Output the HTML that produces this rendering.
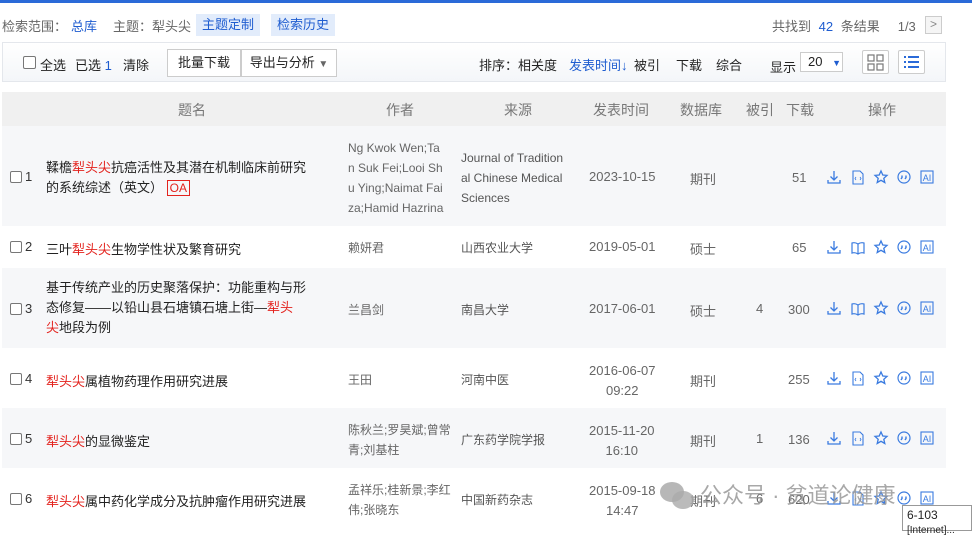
<!DOCTYPE html><html><head><meta charset="utf-8"><style>
*{margin:0;padding:0;box-sizing:border-box}
body{width:972px;height:531px;overflow:hidden;background:#fff;font-family:"Liberation Sans","Noto Sans CJK SC",sans-serif;font-size:13px;color:#333;position:relative}
.a{position:absolute;white-space:nowrap}
.blue{color:#1f5dd0}
.red{color:#e3231e}
.g{color:#666}
.row{position:absolute;left:2px;width:944px}
</style></head><body>
<div class="a" style="left:0;top:0;width:972px;height:3px;background:#2a6ad8"></div>
<div class="a g" style="left:2px;top:16px">检索范围：<b class="blue" style="font-weight:normal;margin-left:4px">总库</b><span style="margin-left:16px">主题：犁头尖</span></div>
<div class="a blue" style="left:196px;top:14px;width:64px;height:22px;background:#e2ecfb;text-align:center;line-height:22px">主题定制</div>
<div class="a blue" style="left:271px;top:14px;width:64px;height:22px;background:#e2ecfb;text-align:center;line-height:22px">检索历史</div>
<div class="a g" style="left:772px;top:16px">共找到 <span class="blue" style="margin:0 4px">42</span> 条结果<span style="margin-left:18px">1/3</span></div>
<div class="a" style="left:925px;top:16px;width:17px;height:18px;border:1px solid #ccc;background:#f5f5f5;text-align:center;line-height:15px;color:#888;font-size:12px">&gt;</div>
<div class="a" style="left:2px;top:42px;width:944px;height:40px;background:linear-gradient(#fff,#f4f6f9);border:1px solid #e4e7ec"></div>
<div class="a" style="left:23px;top:56px;width:13px;height:13px;border:1px solid #777;border-radius:2px;background:#fff"></div>
<div class="a" style="left:40px;top:55px;color:#222">全选</div>
<div class="a" style="left:75px;top:55px;color:#222">已选 <span class="blue">1</span></div>
<div class="a" style="left:123px;top:55px;color:#222">清除</div>
<div class="a" style="left:167px;top:49px;width:74px;height:28px;border:1px solid #ccc;background:#fff;text-align:center;line-height:26px;color:#222">批量下载</div>
<div class="a" style="left:241px;top:49px;width:96px;height:28px;border:1px solid #ccc;background:#fff;text-align:center;line-height:26px;color:#222">导出与分析 <span style="color:#666;font-size:10px">▼</span></div>
<div class="a" style="left:479px;top:55px;color:#222">排序：相关度</div>
<div class="a blue" style="left:569px;top:55px">发表时间<span style="font-weight:bold">↓</span></div>
<div class="a" style="left:634px;top:55px;color:#222">被引</div>
<div class="a" style="left:676px;top:55px;color:#222">下载</div>
<div class="a" style="left:716px;top:55px;color:#222">综合</div>
<div class="a" style="left:770px;top:57px;color:#222">显示</div>
<div class="a" style="left:800px;top:52px;width:43px;height:20px;border:1px solid #ccc;background:#fff;padding-left:7px;line-height:18px;color:#222">20 <span style="color:#1f5dd0;font-size:9px;margin-left:6px">▼</span></div>
<div class="a" style="left:862px;top:50px;width:27px;height:24px;border:1px solid #ccc;border-radius:2px;background:#fff"><svg width="25" height="22"><g fill="none" stroke="#777" stroke-width="1.2"><rect x="5" y="4" width="6" height="6"/><rect x="14" y="4" width="6" height="6"/><rect x="5" y="13" width="6" height="6"/><rect x="14" y="13" width="6" height="6"/></g></svg></div>
<div class="a" style="left:898px;top:50px;width:27px;height:24px;border:1px solid #ccc;border-radius:2px;background:#fff"><svg width="25" height="22"><g stroke="#2a6ad8" stroke-width="2"><line x1="5" y1="6" x2="7" y2="6"/><line x1="9" y1="6" x2="20" y2="6"/><line x1="5" y1="11" x2="7" y2="11"/><line x1="9" y1="11" x2="20" y2="11"/><line x1="5" y1="16" x2="7" y2="16"/><line x1="9" y1="16" x2="20" y2="16"/></g></svg></div>

<div class="row" style="top:92px;height:34px;background:#f0f0f0;color:#777;font-size:14px">
<span class="a" style="left:176px;top:8px">题名</span><span class="a" style="left:384px;top:8px">作者</span><span class="a" style="left:502px;top:8px">来源</span><span class="a" style="left:591px;top:8px">发表时间</span><span class="a" style="left:678px;top:8px">数据库</span><span class="a" style="left:744px;top:8px">被引</span><span class="a" style="left:784px;top:8px">下载</span><span class="a" style="left:866px;top:8px">操作</span></div>

<div class="row" style="top:126px;height:100px;background:#f6f7f9"></div>
<div class="row" style="top:268px;height:80px;background:#f6f7f9"></div>
<div class="row" style="top:408px;height:60px;background:#f6f7f9"></div>

<div class="a" style="left:10px;top:171px;width:12px;height:12px;border:1px solid #777;border-radius:2px;background:#fff"></div><div class="a" style="left:25px;top:169px">1</div>
<div class="a" style="left:46px;top:158px;line-height:20px;font-size:13px;color:#222">鞣檐<span class="red">犁头尖</span>抗癌活性及其潜在机制临床前研究<br>的系统综述（英文） <span class="red" style="border:1px solid #e3231e;padding:0 2px;font-size:12px">OA</span></div>
<div class="a g" style="left:348px;top:138px;line-height:20px;font-size:12px">Ng Kwok Wen;Ta<br>n Suk Fei;Looi Sh<br>u Ying;Naimat Fai<br>za;Hamid Hazrina</div>
<div class="a" style="left:461px;top:148px;line-height:20px;font-size:12px;color:#555">Journal of Tradition<br>al Chinese Medical<br>Sciences</div>
<div class="a g" style="left:589px;top:169px">2023-10-15</div><div class="a g" style="left:690px;top:169px">期刊</div><div class="a g" style="left:792px;top:170px">51</div>

<div class="a" style="left:10px;top:241px;width:12px;height:12px;border:1px solid #777;border-radius:2px;background:#fff"></div><div class="a" style="left:25px;top:239px">2</div>
<div class="a" style="left:46px;top:239px;color:#222">三叶<span class="red">犁头尖</span>生物学性状及繁育研究</div>
<div class="a g" style="left:348px;top:239px;font-size:12px">赖妍君</div><div class="a" style="left:461px;top:239px;font-size:12px;color:#555">山西农业大学</div>
<div class="a g" style="left:589px;top:239px">2019-05-01</div><div class="a g" style="left:690px;top:239px">硕士</div><div class="a g" style="left:792px;top:240px">65</div>

<div class="a" style="left:10px;top:303px;width:12px;height:12px;border:1px solid #777;border-radius:2px;background:#fff"></div><div class="a" style="left:25px;top:301px">3</div>
<div class="a" style="left:46px;top:278px;line-height:20px;color:#222">基于传统产业的历史聚落保护：功能重构与形<br>态修复——以铅山县石塘镇石塘上街—<span class="red">犁头</span><br><span class="red">尖</span>地段为例</div>
<div class="a g" style="left:348px;top:301px;font-size:12px">兰昌剑</div><div class="a" style="left:461px;top:301px;font-size:12px;color:#555">南昌大学</div>
<div class="a g" style="left:589px;top:301px">2017-06-01</div><div class="a g" style="left:690px;top:301px">硕士</div><div class="a g" style="left:756px;top:301px">4</div><div class="a g" style="left:788px;top:302px">300</div>

<div class="a" style="left:10px;top:373px;width:12px;height:12px;border:1px solid #777;border-radius:2px;background:#fff"></div><div class="a" style="left:25px;top:371px">4</div>
<div class="a" style="left:46px;top:371px;color:#222"><span class="red">犁头尖</span>属植物药理作用研究进展</div>
<div class="a g" style="left:348px;top:371px;font-size:12px">王田</div><div class="a" style="left:461px;top:371px;font-size:12px;color:#555">河南中医</div>
<div class="a g" style="left:589px;top:361px;line-height:20px;text-align:center">2016-06-07<br>09:22</div><div class="a g" style="left:690px;top:371px">期刊</div><div class="a g" style="left:788px;top:372px">255</div>

<div class="a" style="left:10px;top:433px;width:12px;height:12px;border:1px solid #777;border-radius:2px;background:#fff"></div><div class="a" style="left:25px;top:431px">5</div>
<div class="a" style="left:46px;top:431px;color:#222"><span class="red">犁头尖</span>的显微鉴定</div>
<div class="a g" style="left:348px;top:420px;line-height:20px;font-size:12px">陈秋兰;罗昊斌;曾常<br>青;刘基柱</div><div class="a" style="left:461px;top:431px;font-size:12px;color:#555">广东药学院学报</div>
<div class="a g" style="left:589px;top:421px;line-height:20px;text-align:center">2015-11-20<br>16:10</div><div class="a g" style="left:690px;top:431px">期刊</div><div class="a g" style="left:756px;top:431px">1</div><div class="a g" style="left:788px;top:432px">136</div>

<div class="a" style="left:10px;top:493px;width:12px;height:12px;border:1px solid #777;border-radius:2px;background:#fff"></div><div class="a" style="left:25px;top:491px">6</div>
<div class="a" style="left:46px;top:491px;color:#222"><span class="red">犁头尖</span>属中药化学成分及抗肿瘤作用研究进展</div>
<div class="a g" style="left:348px;top:480px;line-height:20px;font-size:12px">孟祥乐;桂新景;李红<br>伟;张晓东</div><div class="a" style="left:461px;top:491px;font-size:12px;color:#555">中国新药杂志</div>
<div class="a g" style="left:589px;top:481px;line-height:20px;text-align:center">2015-09-18<br>14:47</div><div class="a g" style="left:690px;top:491px">期刊</div><div class="a g" style="left:756px;top:491px">6</div><div class="a g" style="left:788px;top:492px">620</div>

<svg class="a" style="left:820px;top:160px" width="130" height="350">
<defs>
<g id="dl" fill="none" stroke="#3a7be0" stroke-width="1.3"><path d="M7 1v9M3.5 6.5L7 10l3.5-3.5M1 10v3h12v-3"/></g>
<g id="doc" fill="none" stroke="#3a7be0" stroke-width="1.1"><path d="M2 1h7l3 3v10H2z"/><path d="M5 7l-1 1.5 1 1.5M9 7l1 1.5-1 1.5" stroke-width=".8"/></g>
<g id="book" fill="none" stroke="#3a7be0" stroke-width="1.2"><path d="M1 3q3-1 6 1q3-2 6-1v10q-3-1-6 1q-3-2-6-1zM7 4v10"/></g>
<g id="star" fill="none" stroke="#3a7be0" stroke-width="1.3"><path d="M7 1l1.8 4 4.2.4-3.2 2.9 1 4.2L7 10.3 3.2 12.5l1-4.2L1 5.4l4.2-.4z"/></g>
<g id="q" fill="none" stroke="#3a7be0" stroke-width="1.2"><circle cx="7" cy="7" r="6"/><path d="M5 5.5v2l-1 1.5M9 5.5v2l-1 1.5" stroke-width="1.4"/></g>
<g id="ai"><rect x="1" y="1" width="12" height="12" fill="none" stroke="#3a7be0" stroke-width="1.1"/><text x="7" y="11" font-size="9" text-anchor="middle" fill="#3a7be0" font-family="Liberation Sans">AI</text></g>
</defs>
<g transform="translate(7,10)"><use href="#dl"/><use href="#doc" x="24"/><use href="#star" x="47"/><use href="#q" x="70"/><use href="#ai" x="93"/></g>
<g transform="translate(7,80)"><use href="#dl"/><use href="#book" x="24"/><use href="#star" x="47"/><use href="#q" x="70"/><use href="#ai" x="93"/></g>
<g transform="translate(7,141)"><use href="#dl"/><use href="#book" x="24"/><use href="#star" x="47"/><use href="#q" x="70"/><use href="#ai" x="93"/></g>
<g transform="translate(7,211)"><use href="#dl"/><use href="#doc" x="24"/><use href="#star" x="47"/><use href="#q" x="70"/><use href="#ai" x="93"/></g>
<g transform="translate(7,271)"><use href="#dl"/><use href="#doc" x="24"/><use href="#star" x="47"/><use href="#q" x="70"/><use href="#ai" x="93"/></g>
<g transform="translate(7,331)"><use href="#dl"/><use href="#doc" x="24"/><use href="#star" x="47"/><use href="#q" x="70"/><use href="#ai" x="93"/></g>
</svg>

<svg class="a" style="left:658px;top:480px" width="40" height="32"><ellipse cx="14" cy="12" rx="12" ry="10" fill="#999" opacity=".7"/><ellipse cx="25" cy="20" rx="11" ry="9" fill="#aaa" opacity=".8"/></svg>
<div class="a" style="left:700px;top:478px;font-size:22px;color:#999;opacity:.85">公众号 · 贫道论健康</div>
<div class="a" style="left:902px;top:505px;width:70px;height:26px;border:1px solid #999;background:#fff;padding:2px 0 0 4px;font-size:12px;color:#222;line-height:14px">6-103<br><span style="font-size:10px">[Internet]...</span></div>
</body></html>
